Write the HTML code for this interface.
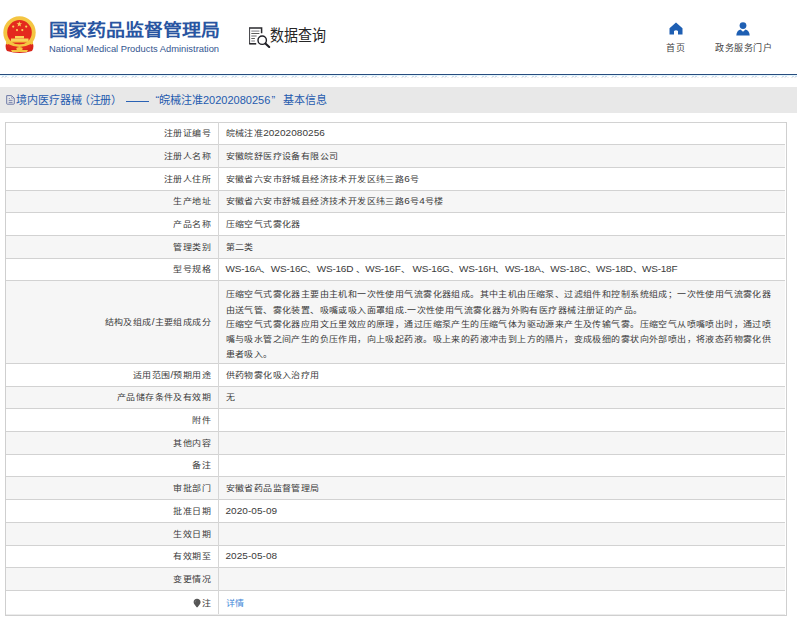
<!DOCTYPE html>
<html lang="zh-CN">
<head>
<meta charset="utf-8">
<style>
*{margin:0;padding:0;box-sizing:border-box}
html,body{width:797px;height:619px;overflow:hidden;background:#fff;font-family:"Liberation Sans",sans-serif;color:#333}
.abs{position:absolute;white-space:nowrap}
#hdr{position:absolute;left:0;top:0;width:797px;height:74px;background:#fff}
#bline{position:absolute;left:0;top:74px;width:797px;height:1px;background:#274c7e}
#cline{position:absolute;left:0;top:75px;width:797px;height:1px;background:#e2f5fb}
#dash{position:absolute;left:0;top:76px;width:797px;height:1px;background:repeating-linear-gradient(90deg,#fff 0 2px,#cddcf0 2px 4px,#fff 4px 5px,#cddcf0 5px 7px,#fff 7px 10px)}
#dash2{position:absolute;left:0;top:77px;width:797px;height:1px;background:repeating-linear-gradient(90deg,#fff 0 1px,#ececec 1px 3px,#fff 3px 4px,#efefef 4px 6px,#fff 6px 7px,#f2f2f2 7px 9px,#fff 9px 10px)}
.logo-cn{left:49px;top:22px;font-size:19px;line-height:19px;font-weight:bold;color:#2955a1;letter-spacing:0px;transform:scaleY(0.87);transform-origin:0 0}
.logo-en{left:49px;top:43px;font-size:9.8px;line-height:11px;color:#33558f;transform:scaleX(0.955);transform-origin:0 0}
.sj{left:270px;top:25px;font-size:14px;color:#262626;transform:scaleY(1.1);transform-origin:0 16px}
.nav{top:42.5px;font-size:9px;line-height:11px;letter-spacing:0.5px;color:#444}
#bar{position:absolute;left:0;top:87px;width:797px;height:26px;background:#e8e8e8}
.title{top:93px;font-size:11px;line-height:14px;color:#1f5aae}
#tbl{position:absolute;left:5px;top:122px;width:782px;height:494px;border:1px solid #cfcfcf;background:#fff}
.row{position:absolute;left:6px;width:779px;border-top:1px solid #d2d2d2}
.g{background:#f6f6f6}
#vdiv{position:absolute;left:218px;top:122px;width:1px;height:493px;background:#d6d6d6}
.lab{position:absolute;right:586px;font-size:9px;letter-spacing:0.41px;color:#3a3a3a;white-space:nowrap;text-align:right}
.val{position:absolute;left:225.5px;font-size:9px;letter-spacing:0.41px;color:#3a3a3a;white-space:nowrap}
.en{font-size:10px;letter-spacing:0.05px}
.en.ws{letter-spacing:-0.22px}
.para{line-height:15.1px}
.lab,.val:not(.para),.pl{transform:scaleY(0.88);transform-origin:50% 50%}
.pl{display:block;width:560px;height:15.1px}

.link{color:#3d86d8}
</style>
</head>
<body>
<div id="hdr"></div>
<!-- emblem -->
<svg class="abs" style="left:0;top:12px" width="40" height="44" viewBox="0 12 40 44">
  <path d="M7 42 Q4 46 7 51 Q19.5 55 32 51 Q35 46 32 42 Z" fill="#d9261c"/>
  <circle cx="19.5" cy="32.4" r="16.2" fill="#f4c542"/>
  <circle cx="19.5" cy="32.4" r="12.3" fill="#e4291e"/>
  <path d="M6 41 Q19.5 48 33 41 L33 44 Q19.5 51 6 44 Z" fill="#f4c542"/>
  <path d="M8 44 Q19.5 50 31 44 L31.5 47 Q19.5 53 7.5 47 Z" fill="#e4291e"/>
  <ellipse cx="19.5" cy="48.8" rx="3.2" ry="1.8" fill="#f4c542"/>
  <path d="M11 50 L28 50 L27 52 L12 52 Z" fill="#f4c542"/>
  <rect x="15" y="36" width="9" height="2.5" fill="#f8d35a"/>
  <rect x="11" y="38.5" width="17.5" height="3" fill="#f8d35a"/>
  <rect x="8.5" y="41" width="22" height="1.5" fill="#f4c542"/>
  <polygon points="19.3,21.3 20,23.3 22.1,23.3 20.4,24.6 21,26.6 19.3,25.4 17.6,26.6 18.2,24.6 16.5,23.3 18.6,23.3" fill="#f8d35a"/>
  <circle cx="13.2" cy="26.6" r="1.1" fill="#f8d35a"/>
  <circle cx="26.2" cy="26.6" r="1.1" fill="#f8d35a"/>
  <circle cx="17" cy="30.1" r="1.1" fill="#f8d35a"/>
  <circle cx="22.3" cy="30.1" r="1.1" fill="#f8d35a"/>
</svg>
<div class="abs logo-cn">国家药品监督管理局</div>
<div class="abs logo-en">National Medical Products Administration</div>
<!-- data query icon -->
<svg class="abs" style="left:246px;top:24px" width="26" height="26" viewBox="246 24 26 26">
  <path d="M249.2 27.9 H261.6 V33.2" fill="none" stroke="#2a2a2e" stroke-width="1.5"/>
  <path d="M249.6 27.5 V44" fill="none" stroke="#3a3a3e" stroke-width="1"/>
  <path d="M249.2 43.8 H256.2" fill="none" stroke="#2a2a2e" stroke-width="1.6"/>
  <path d="M251.3 31.1 H259.4" stroke="#9a9a9e" stroke-width="1.3"/>
  <path d="M251.3 33.5 H259.4" stroke="#333" stroke-width="0.8"/>
  <path d="M251.3 36 H256.6" stroke="#8a8a8e" stroke-width="1.3"/>
  <path d="M251.3 38.5 H254.9" stroke="#333" stroke-width="0.8"/>
  <path d="M251.3 41 H254.9" stroke="#9a9a9e" stroke-width="1.3"/>
  <circle cx="262.2" cy="40.2" r="4.2" fill="#fff" stroke="#1f1f26" stroke-width="1.4"/>
  <path d="M265.4 43.4 L269.2 47" stroke="#1f1f26" stroke-width="2.1" stroke-linecap="round"/>
</svg>
<div class="abs sj">数据查询</div>
<!-- nav -->
<svg class="abs" style="left:669px;top:22px" width="14" height="13" viewBox="0 0 14 13">
  <path d="M7 0.5 L13.5 6.2 V12.5 H9 V9 Q7 7.5 5 9 V12.5 H0.5 V6.2 Z" fill="#1e5fb3"/>
</svg>
<div class="abs nav" style="left:666px">首页</div>
<svg class="abs" style="left:736px;top:22px" width="14" height="14" viewBox="0 0 14 14">
  <circle cx="7" cy="3.6" r="3.4" fill="#1e5fb3"/>
  <path d="M0.3 13.6 Q0.6 8.2 4.5 7.4 L7 9.8 L9.5 7.4 Q13.4 8.2 13.7 13.6 Z" fill="#1e5fb3"/>
</svg>
<div class="abs nav" style="left:715px">政务服务门户</div>
<div id="bline"></div><div id="cline"></div><div id="dash"></div><div id="dash2"></div>

<div id="bar"></div>
<svg class="abs" style="left:2px;top:91px" width="20" height="18" viewBox="2 91 20 18">
  <path d="M6.7 95.6 H11.6 L14.3 98.3 V103.6 Q14.3 104.2 13.7 104.2 H7.3 Q6.7 104.2 6.7 103.6 Z" fill="none" stroke="#6c78a6" stroke-width="1"/>
  <path d="M11.6 95.6 V98.3 H14.3" fill="none" stroke="#8a94bb" stroke-width="0.7"/>
  <rect x="8.8" y="98" width="1" height="0.9" fill="#6c78a6"/>
  <path d="M8.7 100.4 H12.5 M8.7 102.4 H12.5" stroke="#6c78a6" stroke-width="0.9"/>
</svg>
<div class="abs title" style="left:15.6px">境内医疗器械</div>
<div class="abs title" style="left:79.2px;letter-spacing:-0.4px">（注册）</div>
<div class="abs title" style="left:126.3px;width:23px;height:1px;top:100.6px;background:#2a62b4"></div>
<div class="abs title" style="left:155.6px;font-size:11px">&#8220;</div>
<div class="abs title" style="left:159px">皖械注准<span style="font-size:11px">20202080256</span></div>
<div class="abs title" style="left:271.6px">&#8221;</div>
<div class="abs title" style="left:283px;letter-spacing:-0.15px">基本信息</div>

<div id="tbl"></div>
<div id="rows">
<div class="row" style="top:122px;height:22px"></div>
<div class="row g" style="top:144px;height:23px"></div>
<div class="row" style="top:167px;height:23px"></div>
<div class="row g" style="top:190px;height:22px"></div>
<div class="row" style="top:212px;height:23px"></div>
<div class="row g" style="top:235px;height:23px"></div>
<div class="row" style="top:258px;height:22px"></div>
<div class="row g" style="top:280px;height:83px"></div>
<div class="row" style="top:363px;height:23px"></div>
<div class="row g" style="top:386px;height:22px"></div>
<div class="row" style="top:408px;height:23px"></div>
<div class="row g" style="top:431px;height:23px"></div>
<div class="row" style="top:454px;height:22px"></div>
<div class="row g" style="top:476px;height:23px"></div>
<div class="row" style="top:499px;height:23px"></div>
<div class="row g" style="top:522px;height:23px"></div>
<div class="row" style="top:545px;height:22px"></div>
<div class="row g" style="top:567px;height:23px"></div>
<div class="row" style="top:590px;height:25px"></div>
<div id="vdiv"></div>
<div style="position:absolute;left:6px;top:614px;width:779px;height:1px;background:#ececec"></div>
<svg class="abs" style="left:193px;top:598px" width="9" height="10" viewBox="0 0 9 10"><path d="M4 0.8 C6.1 0.8 7.6 2.2 7.6 4.2 C7.6 6 5.6 7.5 4.6 9.2 L3.6 9.2 C2.6 7.5 0.6 6 0.6 4.2 C0.6 2.2 2 0.8 4 0.8Z" fill="#555"/><path d="M3.4 2.2 Q2 2.8 2.1 4.4" stroke="#888" stroke-width="0.7" fill="none"/></svg>
<div class="lab" style="top:126.0px;line-height:14px">注册证编号</div>
<div class="val" style="top:126.0px;line-height:14px">皖械注准<span class="en">20202080256</span></div>
<div class="lab" style="top:148.5px;line-height:14px">注册人名称</div>
<div class="val" style="top:148.5px;line-height:14px">安徽皖舒医疗设备有限公司</div>
<div class="lab" style="top:171.5px;line-height:14px">注册人住所</div>
<div class="val" style="top:171.5px;line-height:14px">安徽省六安市舒城县经济技术开发区纬三路<span class="en">6</span>号</div>
<div class="lab" style="top:194.0px;line-height:14px">生产地址</div>
<div class="val" style="top:194.0px;line-height:14px">安徽省六安市舒城县经济技术开发区纬三路<span class="en">6</span>号<span class="en">4</span>号楼</div>
<div class="lab" style="top:216.5px;line-height:14px">产品名称</div>
<div class="val" style="top:216.5px;line-height:14px">压缩空气式雾化器</div>
<div class="lab" style="top:239.5px;line-height:14px">管理类别</div>
<div class="val" style="top:239.5px;line-height:14px">第二类</div>
<div class="lab" style="top:262.0px;line-height:14px">型号规格</div>
<div class="val" style="top:262.0px;line-height:14px"><span class="en ws">WS-16A</span>、<span class="en ws">WS-16C</span>、<span class="en ws">WS-16D </span>、<span class="en ws">WS-16F</span>、<span class="en ws"> WS-16G</span>、<span class="en ws">WS-16H</span>、<span class="en ws">WS-18A</span>、<span class="en ws">WS-18C</span>、<span class="en ws">WS-18D</span>、<span class="en ws">WS-18F</span></div>
<div class="lab" style="top:314.5px;line-height:14px">结构及组成<span class="en">/</span>主要组成成分</div>
<div class="val para" style="top:286.8px"><span class="pl j">压缩空气式雾化器主要由主机和一次性使用气流雾化器组成。其中主机由压缩泵、过滤组件和控制系统组成；一次性使用气流雾化器</span><span class="pl">由送气管、雾化装置、吸嘴或吸入面罩组成<span class="en">.</span>一次性使用气流雾化器为外购有医疗器械注册证的产品。</span><span class="pl j">压缩空气式雾化器应用文丘里效应的原理，通过压缩泵产生的压缩气体为驱动源来产生及传输气雾。压缩空气从喷嘴喷出时，通过喷</span><span class="pl j">嘴与吸水管之间产生的负压作用，向上吸起药液。吸上来的药液冲击到上方的隔片，变成极细的雾状向外部喷出，将液态药物雾化供</span><span class="pl">患者吸入。</span></div>
<div class="lab" style="top:367.5px;line-height:14px">适用范围<span class="en">/</span>预期用途</div>
<div class="val" style="top:367.5px;line-height:14px">供药物雾化吸入治疗用</div>
<div class="lab" style="top:390.0px;line-height:14px">产品储存条件及有效期</div>
<div class="val" style="top:390.0px;line-height:14px">无</div>
<div class="lab" style="top:412.5px;line-height:14px">附件</div>
<div class="lab" style="top:435.5px;line-height:14px">其他内容</div>
<div class="lab" style="top:458.0px;line-height:14px">备注</div>
<div class="lab" style="top:480.5px;line-height:14px">审批部门</div>
<div class="val" style="top:480.5px;line-height:14px">安徽省药品监督管理局</div>
<div class="lab" style="top:503.5px;line-height:14px">批准日期</div>
<div class="val" style="top:503.5px;line-height:14px"><span class="en">2020-05-09</span></div>
<div class="lab" style="top:526.5px;line-height:14px">生效日期</div>
<div class="lab" style="top:549.0px;line-height:14px">有效期至</div>
<div class="val" style="top:549.0px;line-height:14px"><span class="en">2025-05-08</span></div>
<div class="lab" style="top:571.5px;line-height:14px">变更情况</div>
<div class="lab" style="top:595.5px;line-height:14px">注</div>
<div class="val link" style="top:595.5px;line-height:14px">详情</div>
</div>
</body>
</html>
